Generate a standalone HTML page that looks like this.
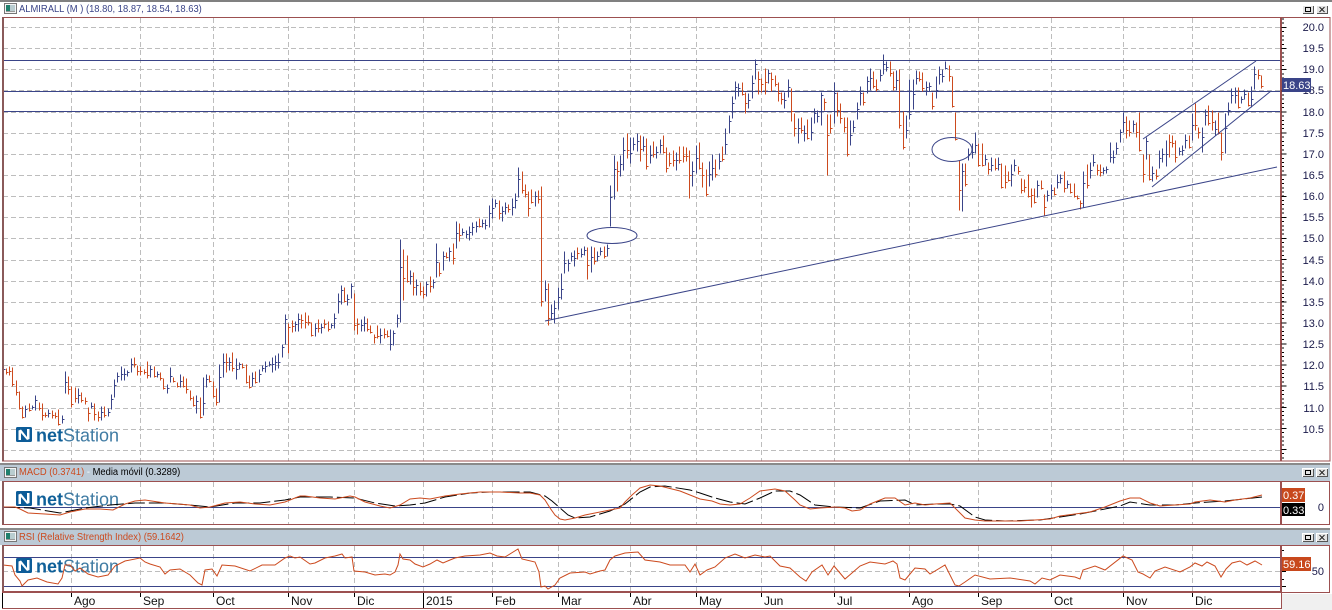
<!DOCTYPE html>
<html><head><meta charset="utf-8"><title>ALMIRALL</title>
<style>
html,body{margin:0;padding:0;background:#fff;width:1332px;height:610px;overflow:hidden}
svg{display:block}
text{font-family:"Liberation Sans",sans-serif}
.px{shape-rendering:crispEdges}
</style></head><body>
<svg width="1332" height="610" viewBox="0 0 1332 610" xmlns="http://www.w3.org/2000/svg">
<defs>
<g id="ico" class="px"><rect x=".5" y=".5" width="12" height="10" fill="#f4f4f4" stroke="#777"/><rect x="2" y="2" width="4" height="7" fill="#1f7f6c"/><rect x="6" y="2" width="5" height="7" fill="#b9cdd0"/><rect x="2" y="8" width="9" height="1" fill="#999"/></g>
<g id="btn"><g class="px"><rect x="0" y="0" width="12" height="9" fill="#e4e4e4"/><path d="M0 8.5H12M11.5 0V9" stroke="#555" fill="none"/><path d="M.5 9V.5H12" stroke="#fff" fill="none"/><rect x="3.5" y="2.5" width="5" height="4" fill="none" stroke="#000"/><path d="M3 2.5H9" stroke="#000"/>
<rect x="14" y="0" width="12" height="9" fill="#e4e4e4"/><path d="M14 8.5H26M25.5 0V9" stroke="#555" fill="none"/><path d="M14.5 9V.5H26" stroke="#fff" fill="none"/></g><path d="M17.5 2L22.5 7M22.5 2L17.5 7" stroke="#222" fill="none"/></g>
<g id="logo"><rect x="0" y="0" width="16" height="15" rx="1.5" fill="#0d5c98"/><path d="M2.5 13V3.5L5 2.5 11 10V2H13.5V12L11 13 5 6V13Z" fill="#fff"/><text x="20" y="14.5" font-size="18" font-weight="bold" fill="#0f6099">net<tspan font-weight="normal" fill="#3f7ba3">Station</tspan></text></g>
</defs>

<!-- frame -->
<rect x="0" y="0" width="1332" height="2" fill="#808080" class="px"/>
<rect x="0" y="463" width="1330" height="2" fill="#8a8a8a" class="px"/>
<rect x="0" y="465" width="1330" height="16" fill="#bccad6" class="px"/>
<rect x="0" y="528" width="1330" height="2" fill="#8a8a8a" class="px"/>
<rect x="0" y="530" width="1330" height="15" fill="#bccad6" class="px"/>
<rect x="1282" y="594" width="50" height="16" fill="#f0f0f0" class="px"/>

<!-- grid -->
<g class="px" stroke="#bdbdbd" fill="none" stroke-dasharray="5 3">
<path d="M3 27.5H1280M3 48.5H1280M3 69.5H1280M3 90.5H1280M3 112.5H1280M3 133.5H1280M3 154.5H1280M3 175.5H1280M3 196.5H1280M3 217.5H1280M3 238.5H1280M3 260.5H1280M3 281.5H1280M3 302.5H1280M3 323.5H1280M3 344.5H1280M3 365.5H1280M3 386.5H1280M3 408.5H1280M3 429.5H1280M3 450.5H1280"/>
<path d="M71.5 18V461M140.5 18V461M213.5 18V461M288.5 18V461M354.5 18V461M423.5 18V461M492.5 18V461M558.5 18V461M630.5 18V461M696.5 18V461M761.5 18V461M834.5 18V461M909.5 18V461M978.5 18V461M1051.5 18V461M1123.5 18V461M1192.5 18V461"/>
<path d="M71.5 482V524M140.5 482V524M213.5 482V524M288.5 482V524M354.5 482V524M423.5 482V524M492.5 482V524M558.5 482V524M630.5 482V524M696.5 482V524M761.5 482V524M834.5 482V524M909.5 482V524M978.5 482V524M1051.5 482V524M1123.5 482V524M1192.5 482V524"/>
<path d="M71.5 546V591M140.5 546V591M213.5 546V591M288.5 546V591M354.5 546V591M423.5 546V591M492.5 546V591M558.5 546V591M630.5 546V591M696.5 546V591M761.5 546V591M834.5 546V591M909.5 546V591M978.5 546V591M1051.5 546V591M1123.5 546V591M1192.5 546V591M3 571.5H1280"/>
</g>

<!-- logos -->
<use href="#logo" x="16" y="427"/>
<use href="#logo" x="16" y="491"/>
<use href="#logo" x="16" y="558"/>

<!-- horizontal levels -->
<g class="px" stroke="#3a4488" fill="none">
<path d="M3 60.5H1280M3 91.5H1280M3 111.5H1280M3 507.5H1280M3 557.5H1280M3 586.5H1280"/>
</g>

<!-- ellipse interiors (under bars) -->
<ellipse cx="612" cy="235.5" rx="25" ry="8" fill="#fff"/>
<ellipse cx="952" cy="149.5" rx="20" ry="12" fill="#fff"/>

<!-- bars -->
<g transform="translate(.5 .5)" class="px" fill="none">
<path stroke="#3a4488" d="M3 365V377m0-8h2M25 405V417m0-8h2M32 405V409m0-2h2M35 395V410m0-10h2M48 409V417m0-4h2M62 415V423m0-4h2M65 371V393m0-11h2M78 388V403m0-8h2M91 402V408m0-2h2M101 406V420m0-8h2M108 408V416m0-4h2M111 394V409m0-10h2M114 379V397m0-12h2M117 372V382m0-6h2M121 366V380m0-6h2M124 368V380m0-6h2M127 370V376m0-4h2M131 358V372m0-8h2M150 365V377m0-8h2M157 371V377m0-3h2M167 384V393m0-5h2M170 367V382m0-6h2M180 374V387m0-6h2M196 395V413m0-12h2M203 377V415m0-12h2M206 374V387m0-8h2M219 364V402m0-25h2M223 353V377m0-15h2M229 357V370m0-8h2M236 358V379m0-10h2M239 362V369m0-5h2M252 372V386m0-8h2M259 369V382m0-8h2M262 365V371m0-3h2M265 361V372m0-6h2M269 361V366m0-2h2M272 357V372m0-8h2M275 355V370m0-8h2M278 353V368m0-6h2M282 344V357m0-10h2M285 314V344m0-25h2M295 321V331m0-7h2M298 313V331m0-12h2M315 323V336m0-8h2M321 323V333m0-6h2M331 323V328m0-3h2M334 313V328m0-10h2M338 293V313m0-12h2M341 285V304m0-14h2M347 294V305m0-6h2M351 283V298m0-12h2M361 319V331m0-6h2M364 316V331m0-8h2M380 328V343m0-8h2M390 329V350m0-6h2M393 330V345m0-12h2M397 314V327m0-9h2M400 239V322m0-55h2M410 270V284m0-8h2M416 279V295m0-10h2M426 281V296m0-12h2M433 279V288m0-6h2M436 243V277m0-15h2M443 251V270m0-14h2M449 247V261m0-10h2M456 221V248m0-15h2M462 228V235m0-3h2M466 230V238m0-4h2M469 226V240m0-8h2M472 222V235m0-8h2M476 221V232m0-6h2M482 219V227m0-4h2M485 219V229m0-4h2M489 205V227m0-14h2M492 198V218m0-10h2M495 199V207m0-4h2M502 206V221m0-10h2M505 202V214m0-7h2M512 198V215m0-8h2M515 193V208m0-8h2M518 167V197m0-18h2M535 191V206m0-10h2M545 280V301m0-12h2M551 304V319m0-6h2M554 300V323m0-15h2M558 287V309m0-12h2M561 273V299m0-10h2M564 251V273m0-10h2M568 259V271m0-8h2M571 252V261m0-5h2M574 250V266m0-8h2M581 248V257m0-3h2M584 246V255m0-5h2M591 246V272m0-15h2M597 251V261m0-5h2M600 247V255m0-4h2M607 244V256m0-8h2M610 185V226m0-29h2M614 155V199m0-30h2M620 155V176m0-12h2M623 137V170m0-20h2M630 137V163m0-10h2M633 137V150m0-6h2M637 133V151m0-10h2M643 136V151m0-5h2M650 145V163m0-8h2M656 146V158m0-6h2M660 139V153m0-8h2M676 152V170m0-10h2M692 161V186m0-15h2M696 145V173m0-15h2M709 161V186m0-12h2M712 154V180m0-12h2M719 153V169m0-8h2M725 128V154m0-10h2M729 115V133m0-12h2M732 96V118m0-15h2M735 81V99m0-12h2M738 83V96m0-8h2M748 93V108m0-8h2M752 75V98m0-15h2M755 59V79m0-15h2M768 69V83m0-10h2M784 92V108m0-8h2M788 79V97m0-10h2M798 118V143m0-15h2M804 125V141m0-8h2M811 117V140m0-8h2M814 108V123m0-10h2M817 110V122m0-6h2M821 92V125m0-30h2M834 82V123m0-30h2M850 120V145m0-10h2M853 120V132m0-5h2M857 102V119m0-10h2M860 86V105m0-12h2M867 76V93m0-12h2M870 68V90m0-12h2M880 69V81m0-6h2M883 54V74m0-10h2M886 61V71m0-4h2M896 70V90m0-10h2M906 115V138m0-8h2M909 79V119m0-5h2M913 79V109m0-15h2M916 70V84m0-6h2M926 81V95m0-8h2M929 82V91m0-5h2M936 76V98m0-8h2M939 66V84m0-10h2M942 69V82m0-6h2M945 61V69m0-1h2M962 163V211m0-40h2M968 148V160m0-6h2M972 143V158m0-6h2M975 132V153m0-8h2M985 154V165m0-6h2M991 157V171m0-6h2M998 157V170m0-6h2M1011 164V186m0-12h2M1014 159V171m0-6h2M1037 180V197m0-12h2M1047 190V201m0-6h2M1051 184V199m0-9h2M1057 174V188m0-6h2M1060 174V183m0-5h2M1067 180V188m0-4h2M1083 171V207m0-24h2M1090 162V178m0-8h2M1093 154V166m0-4h2M1103 167V174m0-4h2M1106 166V173m0-4h2M1110 142V162m0-5h2M1113 150V163m0-6h2M1116 142V154m0-6h2M1120 129V142m0-10h2M1123 112V132m0-10h2M1133 120V132m0-8h2M1146 137V159m0-18h2M1152 166V181m0-8h2M1159 150V168m0-10h2M1162 148V162m0-8h2M1166 140V166m0-12h2M1179 147V155m0-4h2M1182 145V155m0-5h2M1185 134V148m0-8h2M1192 113V140m0-15h2M1202 127V152m0-15h2M1205 109V125m0-10h2M1215 120V135m0-6h2M1225 113V153m0-25h2M1228 102V115m0-5h2M1231 88V103m0-8h2M1235 87V103m0-8h2M1241 96V103m0-4h2M1244 89V99m0-5h2M1251 86V107m0-8h2M1254 66V89m0-15h2"/>
<path stroke="#cc4a1e" d="M6 368V374m0-2h2M9 366V375m0-4h2M12 367V386m0-2h2M16 380V395m0-3h2M19 391V409m0-1h2M22 406V418m0-1h2M29 403V411m0-1h2M39 402V410m0-2h2M42 403V420m0-5h2M45 412V417m0-2h2M52 410V418m0-3h2M55 412V418m0-2h2M58 409V425m0-1h2M68 376V394m0-5h2M71 386V407m0-3h2M75 387V402m0-4h2M81 392V402m0-2h2M85 397V404m0-3h2M88 407V421m0-8h2M94 403V420m0-6h2M98 411V421m0-4h2M104 406V417m0-2h2M134 357V367m0-3h2M137 365V375m0-4h2M140 366V375m0-4h2M144 369V374m0-2h2M147 361V378m0-3h2M154 366V377m0-1h2M160 372V380m0-2h2M163 378V389m0-1h2M173 377V382m0-1h2M177 382V387m0-1h2M183 376V387m0-1h2M186 378V393m0-4h2M190 390V400m0-2h2M193 396V406m0-1h2M200 397V418m0-1h2M209 375V382m0-1h2M213 381V397m0-1h2M216 388V405m0-3h2M226 353V372m0-10h2M232 352V371m0-3h2M242 363V368m0-1h2M246 364V383m0-1h2M249 375V388m0-1h2M255 371V383m0-1h2M288 323V353m0-26h2M292 320V332m0-6h2M301 314V328m0-8h2M305 312V328m0-6h2M308 315V325m0-3h2M311 322V336m0-1h2M318 319V332m0-4h2M324 319V328m0-4h2M328 321V331m0-2h2M344 287V302m0-1h2M354 293V330m0-5h2M357 318V334m0-10h2M367 318V331m0-2h2M370 325V333m0-1h2M374 334V343m0-6h2M377 325V338m0-2h2M384 328V338m0-4h2M387 330V337m0-1h2M403 249V300m0-22h2M407 255V282m0-1h2M413 272V295m0-8h2M420 282V295m0-4h2M423 286V298m0-4h2M430 276V292m0-6h2M439 262V276m0-3h2M446 252V258m0-1h2M453 243V264m0-6h2M459 223V241m0-6h2M479 218V227m0-1h2M499 200V219m0-6h2M508 204V212m0-3h2M522 171V193m0-3h2M525 184V197m0-3h2M528 191V216m0-8h2M531 189V203m0-1h2M538 190V203m0-4h2M541 186V306m0-5h2M548 283V325m0-7h2M577 247V259m0-6h2M587 247V279m0-14h2M594 247V264m0-3h2M604 246V258m0-2h2M617 161V191m0-20h2M627 133V158m0-8h2M640 135V161m0-12h2M646 138V169m0-3h2M653 141V157m0-3h2M663 135V153m0-1h2M666 147V172m0-4h2M669 152V166m0-3h2M673 150V166m0-6h2M679 146V163m0-3h2M683 146V162m0-6h2M686 147V161m0-5h2M689 150V198m0-23h2M699 142V169m0-1h2M702 162V187m0-12h2M706 169V196m0-2h2M715 159V177m0-3h2M722 146V161m0-2h2M742 82V95m0-1h2M745 92V113m0-10h2M758 71V94m0-15h2M761 78V92m0-8h2M765 68V94m0-12h2M771 72V91m0-12h2M775 75V86m0-2h2M778 82V101m0-8h2M781 92V104m0-5h2M791 88V121m0-10h2M794 113V136m0-8h2M801 117V133m0-3h2M807 119V139m0-1h2M824 98V110m0-8h2M827 114V175m0-40h2M830 114V133m0-5h2M837 92V116m0-6h2M840 103V123m0-5h2M844 117V132m0-5h2M847 117V156m0-2h2M863 92V105m0-3h2M873 71V88m0-2h2M876 79V91m0-2h2M890 61V76m0-3h2M893 71V90m0-3h2M899 69V128m0-3h2M903 111V149m0-2h2M919 71V81m0-2h2M922 72V91m0-3h2M932 92V109m0-3h2M949 65V81m0-5h2M952 76V107m0-1h2M955 112V140m0-1h2M959 160V210m0-20h2M965 163V186m0-2h2M978 143V166m0-1h2M982 143V166m0-1h2M988 162V174m0-5h2M995 158V170m0-2h2M1001 163V188m0-1h2M1005 165V188m0-6h2M1008 171V181m0-1h2M1018 166V174m0-3h2M1021 178V193m0-3h2M1024 179V192m0-5h2M1028 174V197m0-1h2M1031 188V207m0-12h2M1034 188V203m0-1h2M1041 180V189m0-1h2M1044 194V215m0-8h2M1054 187V195m0-1h2M1064 171V192m0-4h2M1070 183V193m0-1h2M1074 183V197m0-1h2M1077 195V199m0-1h2M1080 200V209m0-6h2M1087 164V188m0-3h2M1097 164V175m0-5h2M1100 164V176m0-4h2M1126 116V138m0-8h2M1129 120V136m0-4h2M1136 122V137m0-5h2M1139 112V151m0-1h2M1143 154V182m0-8h2M1149 154V180m0-1h2M1156 169V179m0-3h2M1169 134V157m0-15h2M1172 135V147m0-4h2M1175 140V162m0-5h2M1189 135V148m0-1h2M1195 103V130m0-5h2M1198 127V138m0-6h2M1208 105V125m0-2h2M1212 110V130m0-8h2M1218 112V134m0-1h2M1221 132V160m0-8h2M1238 87V108m0-1h2M1248 92V106m0-1h2M1258 69V79m0-4h2M1261 75V88m0-2h2"/>
</g>

<!-- drawings -->
<g fill="none" stroke="#3a4488" stroke-width="1">
<path d="M545 321L1277 167"/>
<path d="M1143 139L1256 61"/>
<path d="M1152 187L1271 91"/>
<ellipse cx="612" cy="235.5" rx="25" ry="8"/>
<ellipse cx="952" cy="149.5" rx="20" ry="12"/>
</g>

<!-- MACD -->
<path fill="none" stroke="#000" stroke-dasharray="17 4" d="M3 507L30 508 60 513 85 508 110 505 135 503 165 503 190 505 210 507 235 503 260 503 285 500 300 497 330 497 355 498 375 503 395 506 410 505 425 503 445 497 470 493 490 492 530 492 545 496 552 501 568 515 575 518 590 517 610 511 625 504 640 492 650 487 665 486 690 490 700 493 715 498 730 502 745 504 760 498 775 491 790 491 800 495 815 505 835 507 860 508 880 501 905 500 915 505 935 504 950 504 960 506 975 517 985 520 1005 521 1040 520 1060 517 1080 514 1100 510 1120 506 1130 502 1150 505 1175 505 1195 503 1225 501 1262 497"/>
<path fill="none" stroke="#cc4a1e" d="M3 507L15 507 20 509 28 513 45 514 60 515 70 512 85 509 100 509 113 510 125 504 135 501 145 500 165 503 190 505 200 508 210 507 225 503 240 502 255 504 270 505 285 502 300 496 305 496 320 498 335 499 350 496 355 497 365 502 380 506 390 508 400 505 410 499 420 498 430 499 445 496 460 494 480 492 500 492 520 493 530 493 540 495 545 500 550 508 555 515 560 519 565 520 575 518 585 515 600 512 610 510 620 508 625 502 632 495 640 488 650 485 660 486 680 491 690 495 700 499 712 501 720 504 730 505 740 504 750 498 760 491 775 489 785 491 795 500 800 505 810 509 820 508 835 507 845 508 852 511 860 510 870 504 885 498 895 498 905 505 915 503 925 505 935 504 950 503 958 511 965 518 975 520 985 521 1000 521 1020 521 1035 520 1050 519 1060 516 1075 514 1090 512 1105 507 1120 501 1130 498 1140 498 1150 503 1160 506 1175 505 1190 504 1195 502 1210 500 1225 502 1235 500 1250 498 1262 495"/>

<!-- RSI -->
<path fill="none" stroke="#cc4a1e" d="M3 565L12 566 15 575 20 581 22 586 28 580 37 578 47 582 58 584 62 578 65 565 70 565 75 571 80 568 88 574 98 577 108 575 115 566 125 561 140 558 145 562 150 564 160 567 165 574 170 570 180 569 190 575 198 583 202 585 205 570 212 569 217 576 222 565 235 566 250 571 262 565 275 565 285 558 290 556 295 558 300 557 310 564 315 563 325 558 335 556 342 554 345 558 352 557 354 571 365 572 375 575 385 574 390 575 395 572 398 565 400 554 403 559 410 560 415 564 423 567 430 564 437 560 443 563 450 560 455 558 465 556 480 555 490 553 497 556 505 557 518 549 522 559 535 562 539 572 541 587 545 586 548 589 555 585 560 578 570 573 585 572 590 574 600 571 605 570 610 560 615 556 625 553 638 552 645 560 660 562 670 565 685 565 690 572 695 564 700 575 707 570 715 567 725 558 735 554 745 558 755 555 765 557 770 556 780 566 790 568 800 577 806 581 812 572 822 565 828 575 834 566 845 579 860 566 870 562 885 564 893 561 897 564 900 578 905 580 915 568 925 569 930 574 945 565 955 585 959 586 965 582 975 575 990 579 1010 578 1030 581 1035 584 1042 578 1050 580 1060 575 1075 577 1080 579 1083 570 1095 566 1105 570 1123 556 1132 560 1138 572 1143 574 1150 578 1155 571 1165 567 1180 572 1190 567 1195 563 1202 566 1207 562 1215 566 1221 577 1226 569 1232 563 1240 561 1247 565 1255 561 1262 565"/>

<!-- panel borders -->
<g class="px" fill="none" stroke="#9c5050">
<path d="M2.5 17.5H1330V461H2.5Z"/>
<path d="M2.5 481.5H1329.5V524.5H2.5Z"/>
<path d="M2.5 545.5H1329.5V592.5H2.5Z"/>
<path d="M1281.5 592V608.5H2.5V592"/>
</g>
<rect x="2" y="17" width="2" height="444" fill="#8a5a5a" class="px"/>
<rect x="1280" y="17" width="2" height="444" fill="#9c5050" class="px"/>
<rect x="1280" y="481" width="2" height="43" fill="#9c5050" class="px"/>
<rect x="1280" y="545" width="2" height="47" fill="#9c5050" class="px"/>
<rect x="2" y="591" width="1280" height="2" fill="#9c5050" class="px"/>
<rect x="2" y="481" width="2" height="43" fill="#8a5a5a" class="px"/>
<rect x="2" y="545" width="2" height="46" fill="#8a5a5a" class="px"/>
<rect x="2" y="593" width="1" height="15" fill="#000" class="px"/>

<!-- axis ticks -->
<g class="px" fill="none" stroke="#000">
<path stroke-width="2" stroke-dasharray="1 3.22" d="M1283 18.5V460"/>
<path stroke-width="5" stroke-dasharray="1 20.1" d="M1284 27V460"/>
<path d="M1282 489.5H1286M1282 507.5H1286"/>
<path d="M1282 550.5h2M1282 557.5h4M1282 564.5h2M1282 571.5h4M1282 579.5h2M1282 586.5h4"/>
<path d="M71.5 593V597M140.5 593V597M213.5 593V597M288.5 593V597M354.5 593V597M423.5 593V608M492.5 593V597M558.5 593V597M630.5 593V597M696.5 593V597M761.5 593V597M834.5 593V597M909.5 593V597M978.5 593V597M1051.5 593V597M1123.5 593V597M1192.5 593V597"/>
</g>

<!-- price axis -->
<g font-size="11" fill="#1a1a4a" text-anchor="end">
<text x="1324" y="31">20.0</text><text x="1324" y="52">19.5</text><text x="1324" y="73">19.0</text><text x="1324" y="94">18.5</text><text x="1324" y="116">18.0</text><text x="1324" y="137">17.5</text><text x="1324" y="158">17.0</text><text x="1324" y="179">16.5</text><text x="1324" y="200">16.0</text><text x="1324" y="221">15.5</text><text x="1324" y="242">15.0</text><text x="1324" y="264">14.5</text><text x="1324" y="285">14.0</text><text x="1324" y="306">13.5</text><text x="1324" y="327">13.0</text><text x="1324" y="348">12.5</text><text x="1324" y="369">12.0</text><text x="1324" y="390">11.5</text><text x="1324" y="412">11.0</text><text x="1324" y="433">10.5</text>
<text x="1324" y="511">0</text><text x="1324" y="575">50</text>
</g>
<rect x="1282" y="78" width="29" height="14" fill="#3a4488" class="px"/>
<text x="1283" y="89" font-size="11" fill="#fff">18.63</text>
<rect x="1282" y="488" width="23" height="14" fill="#c8481c" class="px"/>
<text x="1283" y="499" font-size="11" fill="#fff">0.37</text>
<rect x="1282" y="503" width="23" height="13" fill="#000" class="px"/>
<text x="1283" y="514" font-size="11" fill="#fff">0.33</text>
<rect x="1282" y="557" width="29" height="14" fill="#c8481c" class="px"/>
<text x="1283" y="568" font-size="11" fill="#fff">59.16</text>

<!-- date labels -->
<g font-size="12" fill="#111">
<text x="74" y="605">Ago</text><text x="143" y="605">Sep</text><text x="216" y="605">Oct</text><text x="291" y="605">Nov</text><text x="357" y="605">Dic</text><text x="426" y="605">2015</text><text x="495" y="605">Feb</text><text x="561" y="605">Mar</text><text x="633" y="605">Abr</text><text x="699" y="605">May</text><text x="764" y="605">Jun</text><text x="837" y="605">Jul</text><text x="912" y="605">Ago</text><text x="981" y="605">Sep</text><text x="1054" y="605">Oct</text><text x="1126" y="605">Nov</text><text x="1195" y="605">Dic</text>
</g>

<!-- headers -->
<use href="#ico" x="4" y="3"/>
<text transform="translate(19 12) scale(.895 1)" font-size="10.5" fill="#3a4488">ALMIRALL (M ) (18.80, 18.87, 18.54, 18.63)</text>
<use href="#btn" x="1302" y="5"/>
<use href="#ico" x="4" y="467"/>
<text transform="translate(19 475) scale(.895 1)" font-size="10.5" fill="#cc4a1e">MACD (0.3741) <tspan fill="#fff">-</tspan> <tspan fill="#000">Media móvil (0.3289)</tspan></text>
<use href="#btn" x="1302" y="468"/>
<use href="#ico" x="4" y="531"/>
<text transform="translate(19 540) scale(.895 1)" font-size="10.5" fill="#cc4a1e">RSI (Relative Strength Index) (59.1642)</text>
<use href="#btn" x="1302" y="533"/>
</svg>
</body></html>
